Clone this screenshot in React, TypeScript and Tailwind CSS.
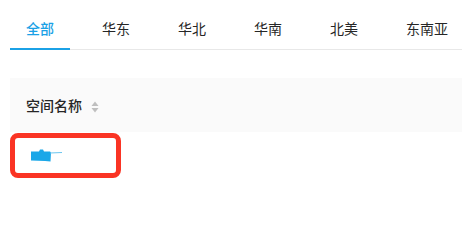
import React from "react";

const tabs = ["全部", "华东", "华北", "华南", "北美", "东南亚"];

function SortIcon() {
  return (
    <svg width="8" height="12" viewBox="0 0 8 12" className="ml-[9px] mt-[4px]">
      <path d="M4 0.5 L7.5 5 L0.5 5 Z" fill="#bfbfbf" />
      <path d="M0.5 7 L7.5 7 L4 11.5 Z" fill="#bfbfbf" />
    </svg>
  );
}

export default function App() {
  return (
    <div
      className="w-[462px] h-[213px] bg-white pl-[10px] overflow-hidden"
      style={{ fontFamily: '"Noto Sans CJK SC", "Noto Sans", sans-serif' }}
    >
      <div className="flex gap-4 border-b border-[#e8e8e8] h-[50px]">
        {tabs.map((t, i) => (
          <div
            key={t}
            className={`relative shrink-0 whitespace-nowrap h-[49px] px-4 pt-[17px] text-[14px] leading-[22px] ${
              i === 0 ? "text-[#1ba1e6] font-medium" : "text-[#262626]"
            }`}
          >
            {t}
            {i === 0 && (
              <div className="absolute left-0 right-0 bottom-[-1px] h-[2px] bg-[#1ba1e6]" />
            )}
          </div>
        ))}
      </div>
      <div className="mt-[28px] h-[54px] bg-[#fafafa] flex items-center pl-4">
        <span className="text-[14px] leading-[22px] font-medium text-[#262626]">空间名称</span>
        <SortIcon />
      </div>
      <div className="mt-[1px] w-[111px] h-[45px] border-[5px] border-[#fa3424] rounded-[8px]">
        <svg width="34" height="14" viewBox="0 0 34 14" className="ml-[16px] mt-[11px]">
          <path
            d="M0 2.5 L8 2.5 L9 0.5 L12 0.5 L13 2.5 L19 2.5 L20 3.5 L19.5 12.5 L14 12 L0 11.5 Z"
            fill="#1aa7e8"
          />
          <path d="M19 4 L31 3.5" stroke="#6cc6ef" strokeWidth="1" />
        </svg>
      </div>
    </div>
  );
}
